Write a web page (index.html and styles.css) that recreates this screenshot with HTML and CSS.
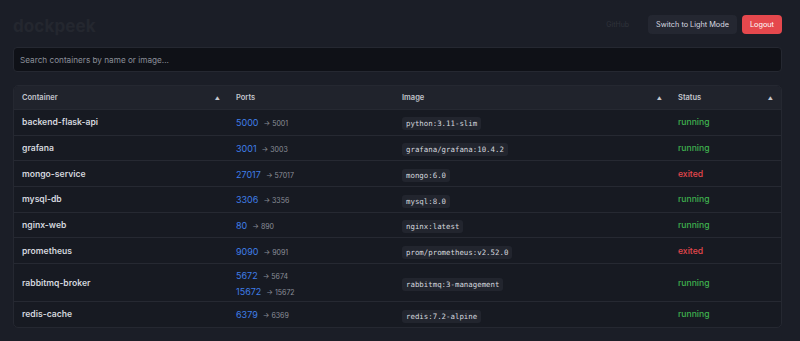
FILE: index.html
```html
<!DOCTYPE html>
<html>
<head>
    <title>dockpeek</title>
    <link rel="stylesheet" href="styles.css">
</head>
<body>
    <header class="topbar">
        <h1 class="brand">dockpeek</h1>
        <nav class="actions">
            <a class="github-link" href="#">GitHub</a>
            <button class="btn btn-theme">Switch to Light Mode</button>
            <button class="btn btn-logout">Logout</button>
        </nav>
    </header>

    <input class="search" type="text" placeholder="Search containers by name or image...">

    <div class="table-wrap">
        <table class="containers">
            <thead>
                <tr>
                    <th class="col-name"><span>Container</span><span class="sort">&#9650;</span></th>
                    <th class="col-ports"><span>Ports</span></th>
                    <th class="col-image"><span>Image</span><span class="sort">&#9650;</span></th>
                    <th class="col-status"><span>Status</span><span class="sort">&#9650;</span></th>
                </tr>
            </thead>
            <tbody>
                <tr>
                    <td class="name">backend-flask-api</td>
                    <td><div class="port"><a href="#">5000</a><span class="host">&rarr; 5001</span></div></td>
                    <td><code>python:3.11-slim</code></td>
                    <td class="status running">running</td>
                </tr>
                <tr>
                    <td class="name">grafana</td>
                    <td><div class="port"><a href="#">3001</a><span class="host">&rarr; 3003</span></div></td>
                    <td><code>grafana/grafana:10.4.2</code></td>
                    <td class="status running">running</td>
                </tr>
                <tr>
                    <td class="name">mongo-service</td>
                    <td><div class="port"><a href="#">27017</a><span class="host">&rarr; 57017</span></div></td>
                    <td><code>mongo:6.0</code></td>
                    <td class="status exited">exited</td>
                </tr>
                <tr>
                    <td class="name">mysql-db</td>
                    <td><div class="port"><a href="#">3306</a><span class="host">&rarr; 3356</span></div></td>
                    <td><code>mysql:8.0</code></td>
                    <td class="status running">running</td>
                </tr>
                <tr>
                    <td class="name">nginx-web</td>
                    <td><div class="port"><a href="#">80</a><span class="host">&rarr; 890</span></div></td>
                    <td><code>nginx:latest</code></td>
                    <td class="status running">running</td>
                </tr>
                <tr>
                    <td class="name">prometheus</td>
                    <td><div class="port"><a href="#">9090</a><span class="host">&rarr; 9091</span></div></td>
                    <td><code>prom/prometheus:v2.52.0</code></td>
                    <td class="status exited">exited</td>
                </tr>
                <tr class="multi">
                    <td class="name">rabbitmq-broker</td>
                    <td>
                        <div class="port"><a href="#">5672</a><span class="host">&rarr; 5674</span></div>
                        <div class="port"><a href="#">15672</a><span class="host">&rarr; 15672</span></div>
                    </td>
                    <td><code>rabbitmq:3-management</code></td>
                    <td class="status running">running</td>
                </tr>
                <tr>
                    <td class="name">redis-cache</td>
                    <td><div class="port"><a href="#">6379</a><span class="host">&rarr; 6369</span></div></td>
                    <td><code>redis:7.2-alpine</code></td>
                    <td class="status running">running</td>
                </tr>
            </tbody>
        </table>
    </div>
</body>
</html>
```

FILE: styles.css
```css
body {
    font-family: Inter, 'Noto Sans', sans-serif;
    margin: 0;
    padding: 15px 18px 15px 13px;
    background: #1b1e27;
    color: #d4d7de;
}
.topbar {
    display: flex;
    justify-content: space-between;
    align-items: center;
    height: 19px;
}
.brand {
    margin: 0;
    font-size: 17px;
    font-weight: 700;
    color: #24272f;
    letter-spacing: 0.1px;
    padding-top: 3px;
}
.actions {
    display: flex;
    align-items: center;
    gap: 5px;
}
.github-link {
    font-size: 7px;
    color: #30333b;
    text-decoration: none;
    margin-right: 14px;
}
.btn {
    font-family: inherit;
    font-size: 7.3px;
    height: 19px;
    padding: 0 8px;
    border: none;
    border-radius: 4px;
    cursor: pointer;
}
.btn-theme {
    background: #242731;
    color: #d9dbe1;
}
.btn-logout {
    background: #e5484d;
    color: #fff;
}
.search {
    display: block;
    width: 100%;
    box-sizing: border-box;
    margin-top: 13px;
    height: 25px;
    padding: 0 6px;
    font-family: inherit;
    font-size: 8.2px;
    background: #0f1117;
    color: #d4d7de;
    border: 1px solid #252831;
    border-radius: 4px;
    outline: none;
}
.search::placeholder {
    color: #8b8f99;
}
.table-wrap {
    margin-top: 13px;
    border: 1px solid #252831;
    border-radius: 5px;
    overflow: hidden;
    background: #171a22;
}
.containers {
    width: 100%;
    border-collapse: collapse;
    table-layout: fixed;
}
.containers th {
    height: 23px;
    padding: 0 8px;
    background: #20232c;
    color: #c3c6cd;
    font-size: 7.5px;
    font-weight: 600;
    text-align: left;
}
.containers th span {
    vertical-align: middle;
}
.sort {
    float: right;
    font-size: 5px;
    color: #c3c6cd;
    line-height: 10px;
}
.col-name { width: 198px; }
.col-ports { width: 150px; }
.col-image { width: 260px; }
.containers td {
    height: 24.7px;
    padding: 0 8px;
    border-top: 1px solid #262932;
    vertical-align: middle;
}
.containers tr.multi td {
    height: 37px;
}
.name {
    font-size: 8.6px;
    font-weight: 600;
    color: #d4d7de;
}
.port {
    line-height: 13px;
}
.port a {
    font-size: 9px;
    color: #3f7ee8;
    text-decoration: none;
}
.host {
    font-size: 7px;
    color: #8b8f99;
    margin-left: 5px;
}
code {
    display: inline-block;
    vertical-align: middle;
    font-family: 'DejaVu Sans Mono', monospace;
    font-size: 7.4px;
    line-height: 13px;
    color: #d4d7de;
    background: #22252e;
    padding: 0 4px;
    border-radius: 3px;
}
.status {
    font-size: 8.6px;
    font-weight: 500;
}
.running {
    color: #3fb24f;
}
.exited {
    color: #e5484d;
}
```
